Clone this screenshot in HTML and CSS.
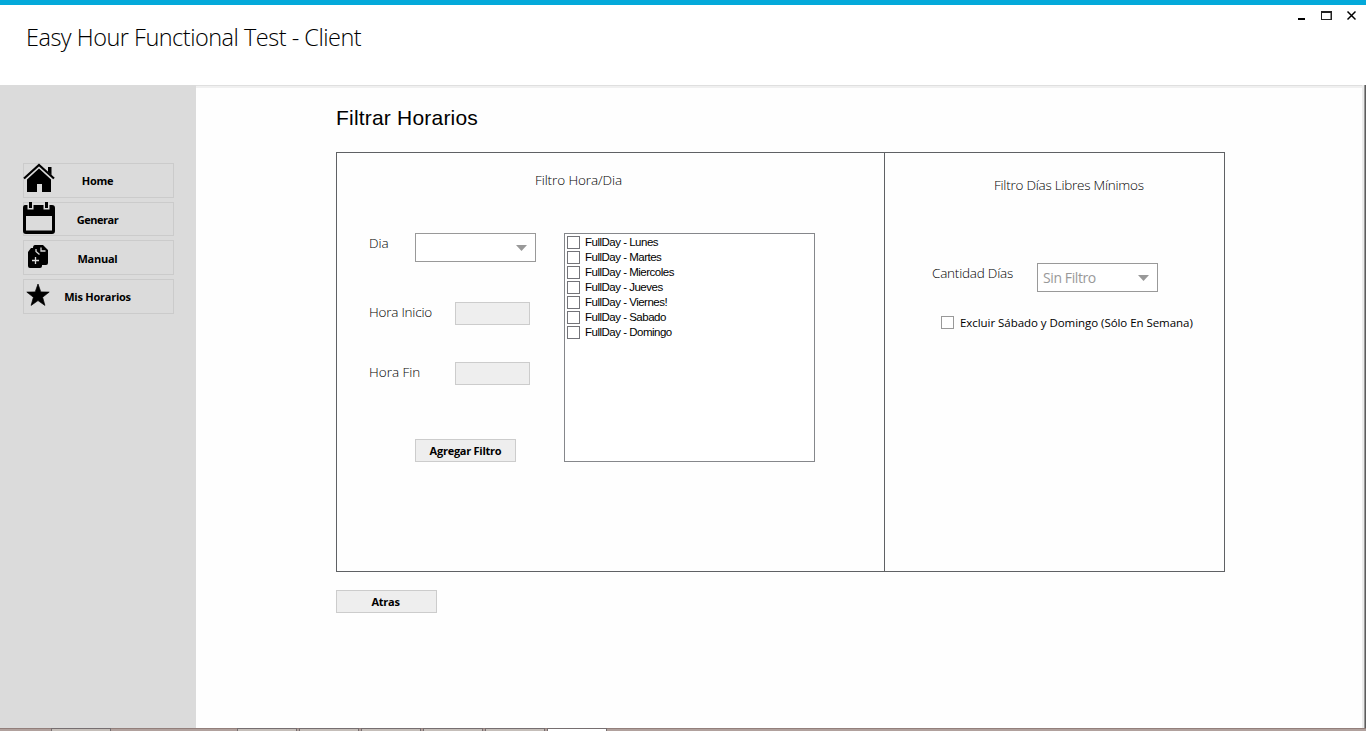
FILE: index.html
```html
<!DOCTYPE html>
<html lang="es">
<head>
<meta charset="utf-8">
<title>Easy Hour Functional Test - Client</title>
<link rel="stylesheet" href="styles.css">
</head>
<body>
<div class="window">
  <header class="titlebar">
    <h1 class="app-title">Easy Hour Functional Test - Client</h1>
    <svg class="controls" width="60" height="14" viewBox="0 0 60 14">
      <path d="M2 9h7v2H2z"/>
      <path d="M25 2h11v9H25zM26 4v6h8.500V4z" fill-rule="evenodd" fill="#222"/>
      <path d="M51.500 2.500l8 8M59.500 2.500l-8 8" fill="none" stroke="#000" stroke-width="1.500"/>
    </svg>
  </header>
  <div class="body">
    <nav class="sidebar">
      <a class="nav-item"><svg class="nav-icon" width="32" height="32" viewBox="0 0 32 32"><path d="M1 15.500L16 2l15 13.500" fill="none" stroke="#000" stroke-width="2.200"/><path d="M25 4h3.500v8L25 9zM16 5.500L28 16.500V29h-9v-8h-5v8H4V16.500z"/></svg><span class="nav-label home">Home</span></a>
      <a class="nav-item"><svg class="nav-icon" width="32" height="32" viewBox="0 0 32 32"><path d="M6 0h3v6H6zM22 0h3v6h-3zM2 3h2.500v4.500h6V3h10v4.500h6V3H29q3 0 3 3v23q0 3-3 3H3q-3 0-3-3V6q0-3 2-3zM3 14v14.500h26V14z" fill-rule="evenodd"/></svg><span class="nav-label generar">Generar</span></a>
      <a class="nav-item"><svg class="nav-icon" width="32" height="32" viewBox="0 0 32 32"><path d="M12 4h8l5 5v13q0 2-2 2h-4v1q0 2-2 2H7q-2 0-2-2V11l3-4h2q0-3 2-3z"/><path d="M13 8v2.500l3.500 3M18 6.500v3.500h4.500M9 19.500h7M12.500 16v7" stroke="#dbdbdb" stroke-width="1.300" fill="none"/></svg><span class="nav-label manual">Manual</span></a>
      <a class="nav-item"><svg class="nav-icon" width="32" height="32" viewBox="0 0 32 32"><path d="M15 5l2.800 7.900 8.400.2-6.600 5.100 2.300 8.200-6.900-4.800-6.900 4.800 2.300-8.200-6.600-5.100 8.400-.2z" stroke="#000" stroke-width=".7"/></svg><span class="nav-label horarios">Mis Horarios</span></a>
    </nav>
    <main class="content">
      <h2 class="page-title">Filtrar Horarios</h2>
      <div class="panel">
        <section class="hours">
          <h3 class="pane-title"><span class="t-hours">Filtro Hora/Dia</span></h3>
          <div class="hours-grid">
            <div class="form">
              <div class="row row-day"><label class="lbl">Dia</label><div class="select"><svg width="11" height="6" viewBox="0 0 11 6"><path d="M0 0h11L5.500 6z"/></svg></div></div>
              <div class="row"><label class="lbl l-inicio">Hora Inicio</label><div class="input"></div></div>
              <div class="row row-end"><label class="lbl">Hora Fin</label><div class="input"></div></div>
              <button class="btn add">Agregar Filtro</button>
            </div>
            <ul class="list">
              <li><i class="check"></i><span>FullDay - Lunes</span></li>
              <li><i class="check"></i><span>FullDay - Martes</span></li>
              <li><i class="check"></i><span>FullDay - Miercoles</span></li>
              <li><i class="check"></i><span>FullDay - Jueves</span></li>
              <li><i class="check"></i><span>FullDay - Viernes!</span></li>
              <li><i class="check"></i><span>FullDay - Sabado</span></li>
              <li><i class="check"></i><span>FullDay - Domingo</span></li>
            </ul>
          </div>
        </section>
        <section class="days">
          <h3 class="pane-title"><span class="t-days">Filtro Días Libres Mínimos</span></h3>
          <div class="row row-count"><label class="lbl l-cant">Cantidad Días</label><div class="select"><span class="value">Sin Filtro</span><svg width="11" height="6" viewBox="0 0 11 6"><path d="M0 0h11L5.500 6z"/></svg></div></div>
          <label class="exclude"><i class="check grey"></i><span>Excluir Sábado y Domingo (Sólo En Semana)</span></label>
        </section>
      </div>
      <button class="btn back">Atras</button>
    </main>
    <div class="edge"></div>
  </div>
  <footer class="taskbar">
    <div class="task first"></div>
    <div class="task"></div>
    <div class="task"></div>
    <div class="task"></div>
    <div class="task"></div>
    <div class="task"></div>
    <div class="task active"></div>
  </footer>
</div>
</body>
</html>
```
FILE: styles.css
```css
* { box-sizing: border-box; }
body { margin: 0; overflow: hidden; background: #fefefe; color: #000; font-family: "Open Sans", sans-serif; }
h1, h2, h3, ul { margin: 0; padding: 0; font-weight: 300; list-style: none; }
span, label, h1, h2 { white-space: nowrap; }
.window { height: 731px; display: flex; flex-direction: column; }

.titlebar { height: 85px; flex: none; display: flex; justify-content: space-between; align-items: flex-start; border-top: 5px solid #04a9da; padding: 0 10px 0 26px; background: #fff; }
.app-title { font-size: 23.5px; line-height: 34px; margin-top: 15px; letter-spacing: -0.5px; }
.controls { margin-top: 4px; }

.body { flex: 1; min-height: 0; display: flex; }
.sidebar { width: 196px; flex: none; background: #dbdbdb; padding: 78px 22px 0 23px; display: flex; flex-direction: column; gap: 4px; }
.nav-item { height: 34.700px; flex: none; display: flex; align-items: center; border: 1px solid #cbcbcb; font-size: 11px; font-weight: 700; }
.nav-icon { margin: -2px 0 0 -1px; flex: none; }
.nav-label { flex: 1; text-align: center; padding-right: 33px; letter-spacing: -0.25px; }
.generar { letter-spacing: -0.5px; }
.manual { padding-top: 1px; }

.content { flex: 1; padding: 18px 0 0 140px; border-top: 1px solid #dfdfdf; box-shadow: inset 0 2px #f0f0f0; }
.page-title { font: 400 21px/28px "Liberation Sans", sans-serif; letter-spacing: 0.2px; height: 48px; }
.edge { width: 4px; background: linear-gradient(90deg, #ececec 50%, #999 50%, #999 75%, #5c5c5c 75%); }

.panel { width: 889px; height: 420px; display: flex; border: 1px solid #5f6164; background: #fefefe; }
.hours { width: 548px; border-right: 1px solid #5f6164; padding: 17px 0 0 32px; }
.pane-title { font-size: 13.500px; line-height: 20px; }
.hours .pane-title { padding-left: 166px; letter-spacing: -0.1px; }
.hours-grid { display: grid; grid-template-columns: 195px 251px; margin-top: 43px; }
.form { display: flex; flex-direction: column; align-items: flex-start; }
.row { display: flex; align-items: flex-start; height: 60px; }
.row-day { height: 69px; }
.row-end { height: 77px; }
.lbl { width: 86px; font-size: 13.500px; font-weight: 300; line-height: 20px; }
.l-inicio, .l-cant { letter-spacing: -0.22px; }
.row-day .lbl { width: 46px; }
.input { width: 75px; height: 23px; border: 1px solid #ccc; background: #eee; }
.select { width: 121px; height: 29px; display: flex; align-items: center; justify-content: flex-end; border: 1px solid #999; background: #fff; padding: 0 8px 0 5px; font-size: 14px; color: #999; }
.select svg { fill: #999; }
.value { flex: 1; letter-spacing: -0.4px; }
.btn { display: block; width: 101px; height: 23px; border: 1px solid #ccc; background: #eee; padding: 0; font: 700 11px/21px "Open Sans", sans-serif; letter-spacing: -0.25px; color: #000; }
.add { margin-left: 46px; }
.back { margin-top: 18px; padding-right: 2px; }
.list { height: 229px; border: 1px solid #85878b; background: #fff; padding: 1px 0 0 2px; }
.list li { height: 15px; display: flex; align-items: center; gap: 5px; font: 11.500px/15px "Liberation Sans", sans-serif; letter-spacing: -0.5px; }
.check { width: 13px; height: 13px; flex: none; border: 1px solid #737378; background: #fff; }
.grey { border-color: #999; }

.days { flex: 1; padding-top: 22px; }
.days .pane-title { padding-left: 109px; letter-spacing: -0.24px; }
.row-count { margin: 68px 0 0 47px; height: 53px; }
.row-count .lbl { width: 105px; }
.exclude { display: flex; align-items: center; gap: 6px; margin-left: 56px; height: 13px; font-size: 11.500px; letter-spacing: -0.05px; }

.taskbar { height: 3px; flex: none; display: flex; gap: 2px; background: #b1a19d; border-top: 1px solid #927f7b; }
.task { width: 60px; height: 3px; margin-top: -1px; border: 1px solid #766e70; border-bottom: 0; background: #c5beb9; }
.first { margin: -1px 124px 0 51px; }
.active { background: #fff; }
```
